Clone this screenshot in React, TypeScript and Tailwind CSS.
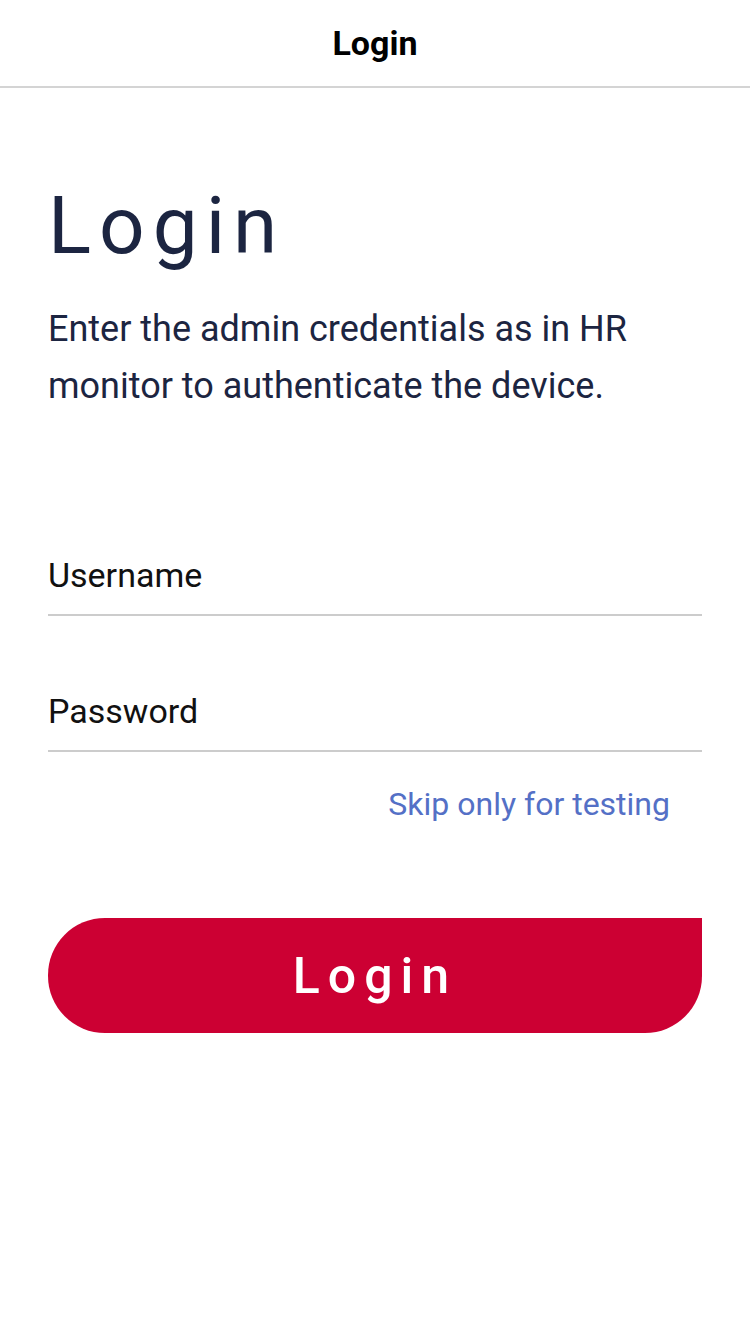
import React from "react";

export default function App() {
  return (
    <div className="w-[750px] h-[1334px] bg-white" style={{ fontFamily: "Roboto, 'Noto Sans', sans-serif" }}>
      <header className="h-[88px] flex items-center justify-center border-b-2 border-[#d4d4d4]">
        <span className="text-[34px] leading-[40px] font-bold text-black">Login</span>
      </header>
      <main className="px-[48px]">
        <h1 className="mt-[98px] text-[80px] leading-[80px] tracking-[0.1em] text-[#1c2541] font-normal">Login</h1>
        <p className="mt-[35px] text-[36px] leading-[57px] text-[#1c2541]">
          Enter the admin credentials as in HR monitor to authenticate the device.
        </p>
        <div className="mt-[140px] pb-[19px] border-b-2 border-[#cccccc]">
          <div className="text-[34px] leading-[40px] text-[#111]">Username</div>
        </div>
        <div className="pt-[75px] pb-[19px] border-b-2 border-[#cccccc]">
          <div className="text-[34px] leading-[40px] text-[#111]">Password</div>
        </div>
        <div className="flex justify-end pr-[32px] mt-[32px]">
          <span className="text-[32px] leading-[40px] text-[#5470c6]">Skip only for testing</span>
        </div>
        <button className="mt-[94px] w-[654px] h-[115px] bg-[#cc0033] text-white rounded-tl-[57px] rounded-bl-[57px] rounded-br-[57px] rounded-tr-none flex items-center justify-center">
          <span className="text-[50px] leading-[60px] font-medium tracking-[0.16em]">Login</span>
        </button>
      </main>
    </div>
  );
}
